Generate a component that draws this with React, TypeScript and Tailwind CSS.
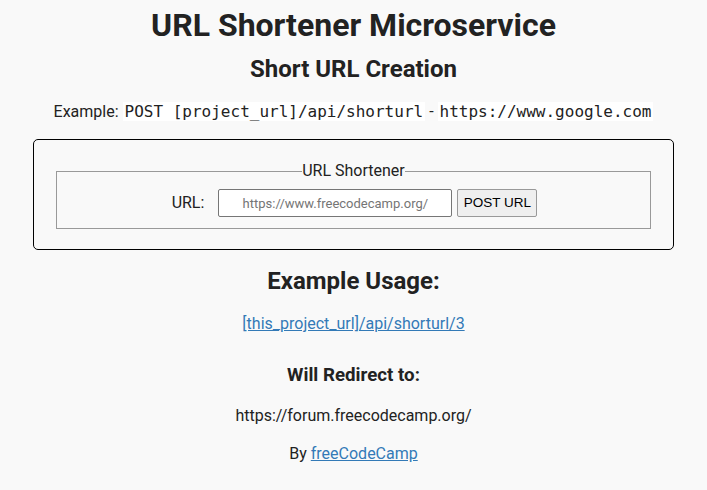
export default function App() {
  return (
    <main
      className="min-h-[490px] bg-[#f9f9f9] text-center text-[16px] text-[#222]"
      style={{ fontFamily: "Roboto, 'Liberation Sans', sans-serif" }}
    >
      <h1 className="pt-[7px] text-[32px] leading-[36px] font-bold">
        URL Shortener Microservice
      </h1>
      <h2 className="mt-[12px] text-[24px] leading-[28px] font-bold">Short URL Creation</h2>

      <p className="mt-[17px] leading-[24px]">
        Example:{" "}
        <code className="bg-white px-[2px] font-['DejaVu_Sans_Mono',monospace] text-[16px]">
          POST [project_url]/api/shorturl
        </code>{" "}
        -{" "}
        <code className="bg-white px-[2px] font-['DejaVu_Sans_Mono',monospace] text-[16px]">
          https://www.google.com
        </code>
      </p>

      <div className="mx-[33px] mt-[15px] rounded-[5px] border border-black px-[22px] pt-[22px] pb-[20px]">
        <form>
          <fieldset className="border border-[#999] px-2 pt-[9px] pb-[11px]">
            <legend className="mx-auto px-0 leading-[18px]">URL Shortener</legend>
            <div className="flex items-center justify-center">
              <label className="mr-[14px] ml-[2px]">URL:</label>
              <input
                type="text"
                placeholder="https://www.freecodecamp.org/"
                className="h-[28px] w-[234px] rounded-[2px] border border-[#767676] bg-white text-center text-[13px] placeholder:text-[#757575]"
                style={{ fontFamily: "Roboto, sans-serif" }}
              />
              <button
                type="button"
                className="ml-[5px] h-[28px] w-[80px] rounded-[2px] border border-[#999] bg-[#efefef] text-[13.5px] text-black"
                style={{ fontFamily: "'Liberation Sans', Arial, sans-serif" }}
              >
                POST URL
              </button>
            </div>
          </fieldset>
        </form>
      </div>

      <h2 className="mt-[17px] text-[24px] leading-[28px] font-bold">Example Usage:</h2>
      <p className="mt-[19px] leading-[20px]">
        <a href="#" className="text-[#337ab7] underline">
          [this_project_url]/api/shorturl/3
        </a>
      </p>

      <h3 className="mt-[30px] text-[18.72px] leading-[22px] font-bold">Will Redirect to:</h3>
      <p className="mt-[20px] leading-[20px]">https://forum.freecodecamp.org/</p>

      <p className="mt-[18px] leading-[20px]">
        By{" "}
        <a href="#" className="text-[#337ab7] underline">
          freeCodeCamp
        </a>
      </p>
    </main>
  );
}
